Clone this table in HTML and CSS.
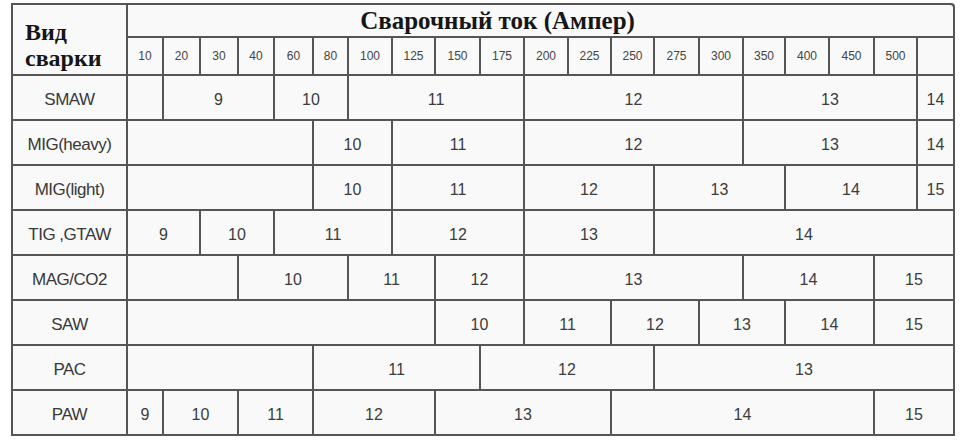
FILE: index.html
```html
<!DOCTYPE html>
<html lang="ru">
<head>
<meta charset="utf-8">
<title>Сварочный ток</title>
<link rel="stylesheet" href="styles.css">
</head>
<body>
<div class="chart">
  <div class="corner">Вид<br>сварки</div>
  <div class="title">Сварочный ток (Ампер)</div>
  <div class="amp">10</div><div class="amp">20</div><div class="amp">30</div><div class="amp">40</div><div class="amp">60</div><div class="amp">80</div><div class="amp">100</div><div class="amp">125</div><div class="amp">150</div><div class="amp">175</div><div class="amp">200</div><div class="amp">225</div><div class="amp">250</div><div class="amp">275</div><div class="amp">300</div><div class="amp">350</div><div class="amp">400</div><div class="amp">450</div><div class="amp">500</div><div class="amp"></div>

  <div class="kind">SMAW</div>
  <div class="c s1"></div><div class="c s3">9</div><div class="c s2">10</div><div class="c s4">11</div><div class="c s5">12</div><div class="c s4">13</div><div class="c s1">14</div>

  <div class="kind">MIG(heavy)</div>
  <div class="c s5"></div><div class="c s2">10</div><div class="c s3">11</div><div class="c s5">12</div><div class="c s4">13</div><div class="c s1">14</div>

  <div class="kind">MIG(light)</div>
  <div class="c s5"></div><div class="c s2">10</div><div class="c s3">11</div><div class="c s3">12</div><div class="c s3">13</div><div class="c s3">14</div><div class="c s1">15</div>

  <div class="kind">TIG ,GTAW</div>
  <div class="c s2">9</div><div class="c s2">10</div><div class="c s3">11</div><div class="c s3">12</div><div class="c s3">13</div><div class="c s7">14</div>

  <div class="kind">MAG/CO2</div>
  <div class="c s3"></div><div class="c s3">10</div><div class="c s2">11</div><div class="c s2">12</div><div class="c s5">13</div><div class="c s3">14</div><div class="c s2">15</div>

  <div class="kind">SAW</div>
  <div class="c s8"></div><div class="c s2">10</div><div class="c s2">11</div><div class="c s2">12</div><div class="c s2">13</div><div class="c s2">14</div><div class="c s2">15</div>

  <div class="kind">PAC</div>
  <div class="c s5"></div><div class="c s4">11</div><div class="c s4">12</div><div class="c s7">13</div>

  <div class="kind">PAW</div>
  <div class="c s1">9</div><div class="c s2">10</div><div class="c s2">11</div><div class="c s3">12</div><div class="c s4">13</div><div class="c s6">14</div><div class="c s2">15</div>
</div>
</body>
</html>
```
FILE: styles.css
```css
html, body {
  margin: 0;
  padding: 0;
  background: #ffffff;
}

.chart {
  margin: 3px 0 0 11px;
  width: max-content;
  display: grid;
  grid-template-columns: 113px 34px 35px 36px 34px 37px 33px 42px 41px 43px 42px 42px 41px 41px 43px 42px 40px 42px 43px 41px 35px;
  grid-template-rows: 31px 36px repeat(8, 43px);
  gap: 2px;
  padding: 2px;
  background: #555555;
  border-top-right-radius: 4px;
  font-family: "Liberation Sans", Arial, sans-serif;
  color: #3c3c3c;
}

.chart > div {
  background: #f9f9f9;
  display: flex;
  align-items: center;
  justify-content: center;
}

.corner {
  grid-row: span 2;
  justify-content: flex-start !important;
  padding: 10px 0 0 12px;
  font-family: "Liberation Serif", "Times New Roman", serif;
  font-weight: bold;
  font-size: 24px;
  line-height: 26px;
  color: #161616;
}

.title {
  grid-column: span 20;
  padding-right: 86px;
  font-family: "Liberation Serif", "Times New Roman", serif;
  font-weight: bold;
  font-size: 25px;
  color: #161616;
  border-top-right-radius: 3px;
}

.amp {
  font-size: 12px;
  color: #444;
}

.kind {
  font-size: 17px;
  letter-spacing: -0.5px;
  padding-top: 4px;
  color: #383838;
}

.c {
  font-size: 16px;
  padding-top: 4px;
}

.s1 { grid-column: span 1; }
.s2 { grid-column: span 2; }
.s3 { grid-column: span 3; }
.s4 { grid-column: span 4; }
.s5 { grid-column: span 5; }
.s6 { grid-column: span 6; }
.s7 { grid-column: span 7; }
.s8 { grid-column: span 8; }
```
